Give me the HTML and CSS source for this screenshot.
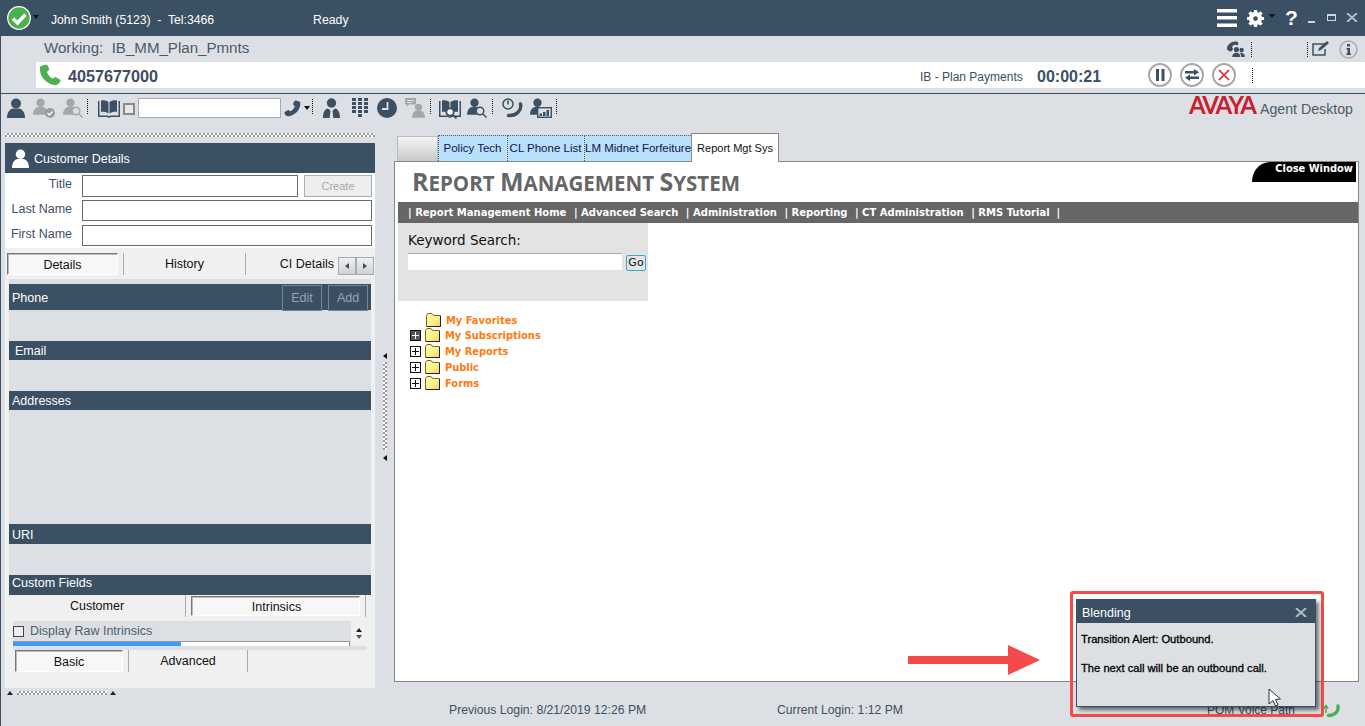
FILE: index.html
```html
<!DOCTYPE html>
<html lang="en">
<head>
    <meta charset="utf-8">
    <title>Avaya Agent Desktop</title>
    <link rel="stylesheet" href="styles.css">
</head>
<body>
    <svg class="defs" width="0" height="0">
        <defs>
            <linearGradient id="folderfill" x1="0" y1="0" x2="1" y2="1">
                <stop offset="0" stop-color="#fffcb0"/>
                <stop offset=".55" stop-color="#fdf08c"/>
                <stop offset="1" stop-color="#f8c878"/>
            </linearGradient>
        </defs>
        <symbol id="person" viewBox="0 0 18 20"><circle cx="9" cy="5.500" r="5"/><path d="M0 20c0-6 3-9 6-9.500h6c3 .5 6 3.500 6 9.500z"/></symbol>
        <symbol id="phone" viewBox="0 0 22 22"><path d="M1 3c-1 7 4 16 14 18 2 .5 5-.5 6-3l.5-1.500c0-.8-4.500-3.500-5.500-3.500l-2 1.500c-2.500-.5-5.500-4-6-6.500l2-2c.5-1-1.500-5.500-2.500-5.500l-2 .5c-2 .5-4 1-4.500 2z"/></symbol>
        <symbol id="book" viewBox="0 0 22 20"><path d="M3 2.500c2.500-.5 5.500 0 7.500 1.500v11.500c-2-1.500-5-2-7.500-1.500zM19 2.500c-2.500-.5-5.500 0-7.500 1.500v11.500c2-1.500 5-2 7.500-1.500z"/><path d="M0 3h1.500v14.500h8.500l1 1 1-1h8.500V3H22v16h-9l-2 1-2-1H0z"/></symbol>
        <symbol id="folder" viewBox="0 0 15 14"><path d="M.5 13.500v-11l1.500-2h4l1.500 2h7v11z" fill="url(#folderfill)" stroke="#6e6e00"/><path d="M1 13.500h13.500V3" fill="none" stroke="#222"/></symbol>
    </svg>

    <div class="page">
        <!-- top title bar -->
        <div class="topbar">
            <svg class="status-icon" viewBox="0 0 24 24"><circle cx="12" cy="12" r="11.300" fill="#4caf50" stroke="#fff" stroke-width="1.200"/><path d="M6 12.500l4.500 4.500 8-8.500" fill="none" stroke="#fff" stroke-width="3.400"/></svg>
            <span class="caret caret-status"></span>
            <span class="agent">John Smith (5123)&nbsp; -&nbsp; Tel:3466</span>
            <span class="ready">Ready</span>
            <span class="top-right">
                <svg class="ic-menu" viewBox="0 0 20 18"><path d="M0 0h20v3.500H0zM0 7h20v3.500H0zM0 14.500h20V18H0z" fill="#fff"/></svg>
                <svg class="ic-gear" viewBox="0 0 20 20"><circle cx="10" cy="10" r="5" fill="none" stroke="#fff" stroke-width="4"/><path d="M10 10L10 1M10 10L10 19M10 10L1 10M10 10L19 10M10 10L3.600 3.600M10 10L16.400 16.400M10 10L16.400 3.600M10 10L3.600 16.400" stroke="#fff" stroke-width="3.400"/><circle cx="10" cy="10" r="2.500" fill="#3c5064"/></svg>
                <span class="caret caret-gear"></span>
                <span class="help">?</span>
                <span class="win-min"></span>
                <span class="win-max"></span>
                <svg class="win-close" viewBox="0 0 12 9"><path d="M1 0l10 9M11 0L1 9" stroke="#fff" stroke-width="2" opacity=".6"/></svg>
            </span>
        </div>

        <!-- work item row -->
        <div class="working">
            <span class="working-text">Working:&nbsp; IB_MM_Plan_Pmnts</span>
            <svg class="ic-conf" viewBox="0 0 20 18"><path d="M1 8c0-4 4-7.500 9-7.500 2 0 3 .5 3 2l-.5 2-3-.5c-2 0-3 1.500-3 3l1 1.500-2 2.500C3 11 1 10 1 8z" fill="#3c5064"/><circle cx="11" cy="9" r="2.700" fill="#3c5064"/><circle cx="16.500" cy="9.500" r="2.300" fill="#3c5064"/><path d="M6.500 17c0-3 2-4.500 4.500-4.500s4 1.500 4 4.500zM15.500 12.500c2.500 0 4.500 1.500 4.500 4.500h-4c0-2-.5-3.500-1.500-4z" fill="#3c5064"/></svg>
            <span class="dots dots-conf"></span>
            <span class="dots dots-note"></span>
            <svg class="ic-note" viewBox="0 0 18 16"><path d="M13 4H1v11h12V9" fill="none" stroke="#3c5064" stroke-width="1.500"/><path d="M6 11l1-3 8-7 2 2-8 7z" fill="#3c5064"/></svg>
            <svg class="ic-info" viewBox="0 0 19 19"><circle cx="9.500" cy="9.500" r="8.500" fill="none" stroke="#a9a9a9" stroke-width="1.500"/><path d="M8 4h3v2.500H8zM7.500 8h3.500v5.500h1V15H7.500v-1.500h1v-4h-1z" fill="#3c5064"/></svg>
        </div>

        <!-- active call row -->
        <div class="callrow">
            <svg class="ic-call"><use href="#phone"/></svg>
            <span class="number">4057677000</span>
            <span class="queue">IB - Plan Payments</span>
            <span class="timer">00:00:21</span>
            <span class="round-btn"><svg viewBox="0 0 12 12"><path d="M2 0h3v12H2zM7.500 0h3v12h-3z" fill="#3c5064"/></svg></span>
            <span class="round-btn"><svg class="swap" viewBox="0 0 14 12"><path d="M0 2h9V0l5 3.250-5 3.250V4.500H0zM14 7.500H5v-2L0 8.750 5 12v-2h9z" fill="#3c5064"/></svg></span>
            <span class="round-btn"><svg viewBox="0 0 12 12"><path d="M1 1l10 10M11 1L1 11" stroke="#d8262c" stroke-width="1.600"/></svg></span>
            <span class="dots dots-call"></span>
        </div>

        <!-- main toolbar -->
        <div class="toolbar">
            <svg class="t-ic t-person"><use href="#person"/></svg>
            <span class="t-badged t-gray">
                <svg class="t-ic t-small"><use href="#person"/></svg>
                <svg class="badge-check" viewBox="0 0 10 10"><circle cx="5" cy="5" r="5" fill="#9c9c9c"/><path d="M2.500 5l2 2 3-3.500" fill="none" stroke="#fff" stroke-width="1.300"/></svg>
            </span>
            <span class="t-badged t-gray t-search-a">
                <svg class="t-ic t-small"><use href="#person"/></svg>
                <svg class="badge-lens" viewBox="0 0 12 12"><circle cx="5" cy="5" r="3.800" fill="#dce0e4" stroke="#a6a6a6" stroke-width="1.500"/><path d="M8 8l3.500 3.500" stroke="#a6a6a6" stroke-width="1.500"/></svg>
            </span>
            <span class="dots dots-a"></span>
            <svg class="t-ic t-book"><use href="#book"/></svg>
            <span class="t-check"></span>
            <input class="t-input" type="text">
            <svg class="t-ic t-phone"><use href="#phone"/></svg>
            <span class="caret caret-dark"></span>
            <span class="dots dots-b"></span>
            <svg class="t-agent" viewBox="0 0 17 20"><circle cx="8.500" cy="5" r="4.700" fill="#3c5064"/><path d="M0 20c0-6 2-9 5-9.500l3 2.500 1 0 3-2.500c3 .5 5 3.500 5 9.500z" fill="#3c5064"/><path d="M7.500 12h2l.8 8H6.700z" fill="#dce0e4"/></svg>
            <span class="dialpad"><i></i><i></i><i></i><i></i><i></i><i></i><i></i><i></i><i></i><i></i><i></i><i></i><b></b><i></i></span>
            <svg class="t-clock" viewBox="0 0 20 20"><circle cx="10" cy="10" r="10" fill="#3c5064"/><path d="M10.500 4v7H5" fill="none" stroke="#dce0e4" stroke-width="1.800"/></svg>
            <span class="t-msg">
                <svg class="t-ic msg-person"><use href="#person"/></svg>
                <svg class="msg-bubble" viewBox="0 0 11 9"><path d="M0 0h11v6.500H4L2 9V6.500H0z" fill="#a6a6a6"/><path d="M2 2h7v1H2zM2 4h5v1H2z" fill="#dce0e4"/></svg>
            </span>
            <span class="dots dots-c"></span>
            <span class="t-badged t-booksearch">
                <svg class="t-ic t-book"><use href="#book"/></svg>
                <svg class="badge-booklens" viewBox="0 0 12 12"><circle cx="5" cy="5" r="3.700" fill="#fff" stroke="#3c5064" stroke-width="1.800"/><path d="M8 8l3.500 3.500" stroke="#3c5064" stroke-width="1.800"/></svg>
            </span>
            <span class="t-badged t-psearch">
                <svg class="t-ic t-small"><use href="#person"/></svg>
                <svg class="badge-lens" viewBox="0 0 12 12"><circle cx="5" cy="5" r="3.800" fill="#dce0e4" stroke="#3c5064" stroke-width="1.500"/><path d="M8 8l3.500 3.500" stroke="#3c5064" stroke-width="1.500"/></svg>
            </span>
            <span class="dots dots-d"></span>
            <svg class="t-timer" viewBox="0 0 21 20"><circle cx="6" cy="6" r="5" fill="none" stroke="#3c5064" stroke-width="1.500"/><path d="M6 2.500v4" stroke="#3c5064" stroke-width="1.600"/><path d="M18.500 6c1.500 6-4 12-12 11.500" fill="none" stroke="#3c5064" stroke-width="3.400" stroke-linecap="round"/></svg>
            <span class="t-badged t-chart">
                <svg class="t-ic t-small"><use href="#person"/></svg>
                <svg class="badge-chart" viewBox="0 0 15 11"><rect x=".7" y=".7" width="13.600" height="9.600" fill="#dce0e4" stroke="#3c5064" stroke-width="1.400"/><path d="M2.500 6.500h2.500v2.500H2.500zM6 5h2.500v4H6zM9.500 3h2.500v6H9.500z" fill="#3c5064"/></svg>
            </span>
            <span class="dots dots-e"></span>
            <span class="brand"><span class="avaya">AVAYA</span><span class="brand-name">Agent Desktop</span></span>
        </div>

        <div class="main">
            <!-- left customer column -->
            <div class="leftcol">
                <div class="grip"></div>
                <div class="cust">
                    <div class="cust-head">
                        <svg class="cust-icon"><use href="#person"/></svg>
                        Customer Details
                    </div>
                    <div class="cust-form">
                        <div class="form-row">
                            <label>Title</label>
                            <span class="field field-short"></span>
                            <span class="create">Create</span>
                        </div>
                        <div class="form-row">
                            <label>Last Name</label>
                            <span class="field"></span>
                        </div>
                        <div class="form-row">
                            <label>First Name</label>
                            <span class="field"></span>
                        </div>
                    </div>
                    <div class="tabs tabs-details">
                        <span class="tab-on tab-details">Details</span>
                        <span class="tab tab-history">History</span>
                        <span class="tab-ci">CI Details</span>
                        <span class="arrows"><i class="arrow-l"></i><i class="arrow-r"></i></span>
                    </div>
                    <div class="sections">
                        <div class="sec-head sec-phone">
                            <span>Phone</span>
                            <span class="sec-btn sec-edit">Edit</span>
                            <span class="sec-btn">Add</span>
                        </div>
                        <div class="sec-body body-phone"></div>
                        <div class="sec-head sec-email">Email</div>
                        <div class="sec-body body-email"></div>
                        <div class="sec-head sec-addr">Addresses</div>
                        <div class="sec-body body-addr"></div>
                        <div class="sec-head sec-uri">URI</div>
                        <div class="sec-body body-uri"></div>
                        <div class="sec-head sec-custom">Custom Fields</div>
                    </div>
                    <div class="tabs tabs-custom">
                        <span class="tab tab-customer">Customer</span>
                        <span class="tab-on tab-intrinsics">Intrinsics</span>
                    </div>
                    <div class="raw">
                        <div class="raw-left">
                            <div class="raw-line"><span class="raw-check"></span>Display Raw Intrinsics</div>
                            <div class="raw-bar"><div class="raw-fill"></div></div>
                        </div>
                        <div class="raw-scroll"><i class="up"></i><i class="down"></i></div>
                    </div>
                    <div class="tabs tabs-basic">
                        <span class="tab-on tab-basic">Basic</span>
                        <span class="tab tab-adv">Advanced</span>
                    </div>
                </div>
                <div class="grip-small"><i class="up"></i><span></span><i class="up"></i></div>
            </div>

            <!-- vertical splitter -->
            <div class="splitter"><i class="tri-l"></i><span></span><i class="tri-l"></i></div>

            <!-- right browser area -->
            <div class="browser">
                <div class="b-tabs">
                    <span class="b-tab-blank"></span>
                    <span class="b-tab b-w1">Policy Tech</span>
                    <span class="b-tab b-w2">CL Phone List</span>
                    <span class="b-tab b-w3">LM Midnet Forfeiture</span>
                    <span class="b-tab-on">Report Mgt Sys</span>
                </div>
                <div class="b-content">
                    <a class="close-win">Close Window</a>
                    <div class="rms-title"><span>R</span>eport <span>M</span>anagement <span>S</span>ystem</div>
                    <div class="rms-nav">
                        <span>| Report Management Home</span>
                        <span>| Advanced Search</span>
                        <span>| Administration</span>
                        <span>| Reporting</span>
                        <span>| CT Administration</span>
                        <span>| RMS Tutorial&nbsp; |</span>
                    </div>
                    <div class="search">
                        <div class="search-label">Keyword Search:</div>
                        <div class="search-row">
                            <span class="search-input"></span>
                            <span class="go">Go</span>
                        </div>
                    </div>
                    <ul class="tree">
                        <li class="tree-first"><svg class="folder"><use href="#folder"/></svg>My Favorites</li>
                        <li><span class="plus plus-on"></span><svg class="folder"><use href="#folder"/></svg>My Subscriptions</li>
                        <li><span class="plus"></span><svg class="folder"><use href="#folder"/></svg>My Reports</li>
                        <li><span class="plus"></span><svg class="folder"><use href="#folder"/></svg>Public</li>
                        <li><span class="plus"></span><svg class="folder"><use href="#folder"/></svg>Forms</li>
                    </ul>
                </div>
            </div>
        </div>

        <!-- bottom status -->
        <div class="status">
            <span class="st-prev">Previous Login: 8/21/2019 12:26 PM</span>
            <span class="st-cur">Current Login: 1:12 PM</span>
            <span class="st-pom">POM Voice Path</span>
            <svg class="st-phone" viewBox="0 0 18 14"><path d="M15 2c1 5-3 9.500-9.500 9.500" fill="none" stroke="#4caf50" stroke-width="3.400" stroke-linecap="round"/><path d="M3 9V3M.8 4.500L3 1.500l2.200 3" fill="none" stroke="#4caf50" stroke-width="1.500"/></svg>
        </div>
    </div>

    <!-- annotation and popup lie over the page -->
    <svg class="red-arrow" viewBox="0 0 132 30"><path d="M0 11h100V0l32 15-32 15V19H0z" fill="#f44a4a"/></svg>
    <div class="red-box"></div>
    <div class="popup">
        <div class="popup-head">
            <span>Blending</span>
            <svg class="popup-x" viewBox="0 0 12 9"><path d="M1 0l10 9M11 0L1 9" stroke="#fff" stroke-width="2" opacity=".6"/></svg>
        </div>
        <div class="popup-body">
            <p>Transition Alert: Outbound.</p>
            <p>The next call will be an outbound call.</p>
        </div>
    </div>
    <svg class="cursor" viewBox="0 0 13 19"><path d="M1 1v15l4-3.500 2.500 5.500 2.500-1-2.500-5.500 5-.5z" fill="#fff" stroke="#333"/></svg>
</body>
</html>
```

FILE: styles.css
```css
* {
    box-sizing: border-box;
}

html, body {
    margin: 0;
    height: 726px;
    overflow: hidden;
}

body {
    font-family: "Liberation Sans", Arial, sans-serif;
    font-size: 12px;
    color: #3c5064;
    background-color: #dce0e4;
    position: relative;
}

.defs {
    position: absolute;
}

.page {
    height: 726px;
    background-color: #dce0e4;
    box-shadow: inset 1px 0 0 #3c5064;
}

.caret {
    width: 0;
    height: 0;
    border-left: 3.500px solid transparent;
    border-right: 3.500px solid transparent;
    border-top: 4px solid #111;
}

.dots {
    width: 0;
    height: 15px;
    border-left: 1px dotted #111;
    flex: none;
}

/* top title bar */
.topbar {
    height: 36px;
    background-color: #3c5064;
    color: #fff;
    display: flex;
    align-items: center;
    padding-left: 7px;
}

.status-icon {
    width: 24px;
    height: 24px;
}

.caret-status {
    margin-left: 2px;
    margin-top: -2px;
}

.agent {
    margin-left: 12px;
    width: 262px;
    white-space: nowrap;
    font-size: 12.200px;
    margin-top: 3px;
}

.ready {
    font-size: 12.300px;
    margin-top: 4px;
}

.top-right {
    margin-left: auto;
    display: flex;
    align-items: center;
    padding-right: 7px;
}

.ic-menu {
    width: 20px;
    height: 18px;
}

.ic-gear {
    width: 19px;
    height: 19px;
    margin-left: 9px;
}

.caret-gear {
    border-top-color: #111;
    margin-left: 4px;
    margin-top: -4px;
}

.help {
    font-size: 21px;
    font-weight: bold;
    margin-left: 10px;
    width: 14px;
    line-height: 22px;
}

.win-min {
    width: 7px;
    height: 2px;
    background-color: #cfd6dc;
    margin-left: 9px;
    margin-top: 7px;
}

.win-max {
    width: 9px;
    height: 7px;
    border: 1px solid #cfd6dc;
    border-top-width: 2px;
    margin-left: 12px;
    margin-top: -1px;
}

.win-close {
    width: 12px;
    height: 9px;
    margin-left: 10px;
    margin-top: -1px;
}

/* working row */
.working {
    height: 26px;
    display: flex;
    align-items: center;
    padding-left: 44px;
    padding-right: 7px;
}

.working-text {
    font-size: 15.100px;
    color: #4c5a68;
    margin-top: -4px;
}

.ic-conf {
    width: 19px;
    height: 17px;
    margin-left: auto;
}

.dots-conf {
    margin-left: 6px;
}

.dots-note {
    margin-left: 55px;
}

.ic-note {
    width: 18px;
    height: 16px;
    margin-left: 4px;
    margin-top: -2px;
}

.ic-info {
    width: 19px;
    height: 19px;
    margin-left: 9px;
}

/* active call row */
.callrow {
    height: 26px;
    margin-left: 36px;
    background-color: #fff;
    display: flex;
    align-items: center;
    padding-left: 3px;
}

.ic-call {
    width: 22px;
    height: 22px;
    fill: #4caf50;
}

.number {
    font-size: 16.200px;
    font-weight: bold;
    color: #3f4d5c;
    margin-left: 7px;
    width: 852px;
    padding-top: 3px;
}

.queue {
    width: 117px;
    color: #3c5064;
    padding-top: 3px;
}

.timer {
    font-size: 16px;
    font-weight: bold;
    width: 111px;
    padding-top: 3px;
}

.round-btn {
    width: 24px;
    height: 24px;
    border: 2px solid #a9a9a9;
    border-radius: 50%;
    display: flex;
    align-items: center;
    justify-content: center;
    margin-right: 8px;
    background-color: #fff;
}

.round-btn svg {
    width: 12px;
    height: 12px;
}

.round-btn .swap {
    width: 14px;
}

.dots-call {
    margin-left: 8px;
}

/* toolbar */
.toolbar {
    height: 40px;
    margin-top: 5px;
    margin-left: 1px;
    border-top: 1px solid #3c5064;
    display: flex;
    align-items: flex-start;
    padding: 4px 12px 0 6px;
    fill: #3c5064;
}

.t-ic {
    flex: none;
}

.t-person {
    width: 18px;
    height: 20px;
}

.t-small {
    width: 15px;
    height: 17px;
}

.t-badged {
    position: relative;
    display: block;
    height: 21px;
    flex: none;
}

.t-gray {
    fill: #a6a6a6;
    width: 22px;
    margin-left: 8px;
}

.t-search-a {
    width: 19px;
}

.badge-check {
    position: absolute;
    left: 12px;
    top: 10px;
    width: 10px;
    height: 10px;
}

.badge-lens {
    position: absolute;
    left: 8px;
    top: 8px;
    width: 12px;
    height: 12px;
}

.dots-a {
    margin-left: 5px;
    margin-top: 1px;
}

.t-book {
    width: 22px;
    height: 20px;
}

.toolbar > .t-book {
    margin-left: 10px;
}

.t-check {
    width: 12px;
    height: 12px;
    border: 2px solid #8a8a8a;
    background-color: #e8e8e8;
    margin-left: 3px;
    margin-top: 5px;
    flex: none;
}

.t-input {
    width: 143px;
    height: 20px;
    border: 1px solid #a9a9c0;
    background-color: #fff;
    margin-left: 3px;
    padding: 0;
    flex: none;
}

.t-phone {
    width: 19px;
    height: 17px;
    margin-left: 2px;
    margin-top: 2px;
    transform: scaleX(-1);
}

.caret-dark {
    margin-left: 2px;
    margin-top: 8px;
    flex: none;
}

.dots-b {
    margin-left: 2px;
    margin-top: 1px;
}

.t-agent {
    width: 17px;
    height: 20px;
    margin-left: 10px;
    flex: none;
}

.dialpad {
    width: 16px;
    display: grid;
    grid-template-columns: repeat(3, 4px);
    column-gap: 2px;
    row-gap: 1px;
    margin-left: 12px;
    flex: none;
}

.dialpad i {
    height: 3px;
    background-color: #3c5064;
}

.dialpad b {
    height: 3px;
}

.t-clock {
    width: 20px;
    height: 20px;
    margin-left: 9px;
    flex: none;
}

.t-msg {
    position: relative;
    width: 20px;
    height: 21px;
    margin-left: 8px;
    flex: none;
    fill: #a6a6a6;
}

.msg-person {
    position: absolute;
    right: 0;
    top: 5px;
    width: 13px;
    height: 15px;
}

.msg-bubble {
    position: absolute;
    left: 0;
    top: 0;
    width: 11px;
    height: 9px;
}

.dots-c {
    margin-left: 5px;
    margin-top: 1px;
}

.t-booksearch {
    width: 22px;
    margin-left: 8px;
}

.badge-booklens {
    position: absolute;
    left: 6px;
    top: 9px;
    width: 12px;
    height: 12px;
}

.t-psearch {
    width: 20px;
    margin-left: 6px;
}

.dots-d {
    margin-left: 5px;
    margin-top: 1px;
}

.t-timer {
    width: 21px;
    height: 20px;
    margin-left: 9px;
    flex: none;
}

.t-chart {
    width: 22px;
    margin-left: 7px;
}

.badge-chart {
    position: absolute;
    left: 7px;
    top: 9px;
    width: 15px;
    height: 11px;
}

.dots-e {
    margin-left: 4px;
    margin-top: 1px;
}

.brand {
    margin-left: auto;
    display: flex;
    align-items: baseline;
    margin-top: -6px;
}

.avaya {
    font-family: Lato, sans-serif;
    font-weight: 700;
    font-size: 24px;
    color: #c8202f;
    letter-spacing: -2px;
    line-height: 26px;
}

.brand-name {
    font-size: 14.200px;
    color: #4c5a68;
    margin-left: 5px;
}

/* main area */
.main {
    display: flex;
    align-items: flex-start;
    height: 560px;
    padding-left: 5px;
}

.leftcol {
    width: 370px;
    flex: none;
}

.grip {
    height: 4px;
    margin-bottom: 6px;
    background: conic-gradient(#999 25%, #fff 0 50%, #999 0 75%, #fff 0) 0 0 / 4px 4px;
}

.cust {
    height: 545px;
    background-color: #f0f0f0;
    font-size: 12.500px;
}

.cust-head {
    height: 30px;
    background-color: #3c5064;
    color: #fff;
    display: flex;
    align-items: center;
    padding: 1px 0 0 7px;
    fill: #fff;
}

.cust-icon {
    width: 17px;
    height: 19px;
    margin-right: 5px;
}

.cust-form {
    height: 75px;
    background-color: #fff;
    padding-top: 2px;
}

.form-row {
    display: flex;
    align-items: flex-start;
    height: 25px;
    padding-right: 3px;
}

.form-row label {
    width: 67px;
    text-align: right;
    margin-right: 10px;
    margin-top: 2px;
}

.field {
    flex: 1;
    height: 21px;
    border: 1px solid #6a6a6a;
    background-color: #fff;
}

.field-short {
    flex: none;
    width: 216px;
    height: 22px;
}

.create {
    width: 68px;
    height: 22px;
    margin-left: 6px;
    background-color: #eee;
    border: 1px solid #a5b0bc;
    color: #a8a8a8;
    font-size: 11px;
    display: flex;
    align-items: center;
    justify-content: center;
}

.tabs {
    display: flex;
    color: #111;
}

.tab {
    display: flex;
    align-items: center;
    justify-content: center;
    height: 22px;
    border-right: 1px solid #aaa;
}

.tab-on {
    display: flex;
    align-items: center;
    justify-content: center;
    height: 22px;
    padding-top: 2px;
    background-color: #f7f7f7;
    border: 1px solid #fff;
    border-top: 1px solid #777;
    border-left: 1px solid #777;
    box-shadow: inset 1px 1px 0 #bbb;
    flex: none;
}

.tabs-details {
    height: 26px;
    margin-top: 5px;
    padding-left: 2px;
}

.tab-details {
    width: 111px;
    margin-right: 5px;
}

.tabs-details .tab {
    border-left: 1px solid #aaa;
}

.tab-history {
    width: 123px;
}

.tab-ci {
    width: 88px;
    height: 22px;
    display: flex;
    align-items: center;
    justify-content: flex-end;
    flex: none;
}

.arrows {
    display: flex;
    margin-left: 4px;
    margin-top: 4px;
}

.arrows i {
    width: 18px;
    height: 18px;
    border: 1px solid #aaa;
    background: linear-gradient(#eef0f3, #cfd2d8);
    display: block;
    position: relative;
}

.arrow-l::after, .arrow-r::after {
    content: "";
    position: absolute;
    left: 6px;
    top: 5px;
    border-top: 3px solid transparent;
    border-bottom: 3px solid transparent;
}

.arrow-l::after {
    border-right: 4px solid #3c5064;
}

.arrow-r::after {
    border-left: 4px solid #3c5064;
}

.sections {
    margin: 0 4px;
    padding-top: 5px;
    background-color: #dce0e4;
}

.sec-head {
    height: 20px;
    background-color: #3c5064;
    color: #fff;
    display: flex;
    align-items: center;
    padding-left: 3px;
}

.sec-phone {
    height: 26px;
    padding-top: 1px;
}

.sec-email {
    height: 19px;
    padding-left: 6px;
}

.sec-addr {
    height: 19px;
    padding-top: 1px;
}

.sec-uri {
    padding-top: 1px;
}

.sec-custom {
    padding-bottom: 4px;
}

.sec-btn {
    width: 40px;
    height: 26px;
    border: 1px solid #75838f;
    color: #9aa4ae;
    display: flex;
    align-items: center;
    justify-content: center;
    margin-right: 3px;
}

.sec-edit {
    margin-left: auto;
    margin-right: 6px;
}

.body-phone {
    height: 31px;
}

.body-email {
    height: 31px;
}

.body-addr {
    height: 114px;
}

.body-uri {
    height: 31px;
}

.tabs-custom {
    height: 22px;
    margin: 0 4px;
    align-items: center;
}

.tab-customer {
    width: 177px;
}

.tab-intrinsics {
    width: 169px;
    height: 20px;
    margin-left: 5px;
    padding-left: 2px;
    padding-top: 2px;
}

.tabs-custom::after {
    content: "";
    width: 1px;
    height: 22px;
    background-color: #aaa;
    margin-left: 5px;
}

.raw {
    display: flex;
    margin: 4px 8px 0;
    height: 29px;
    background-color: #dce0e4;
}

.raw-left {
    width: 337px;
}

.raw-line {
    height: 20px;
    display: flex;
    align-items: center;
    color: #4c5e70;
}

.raw-check {
    width: 11px;
    height: 11px;
    border: 1px solid #444;
    background-color: #eee;
    margin-right: 6px;
}

.raw-bar {
    height: 5px;
    background-color: #fff;
    border-top: 1px solid #999;
    border-right: 1px solid #999;
}

.raw-fill {
    width: 168px;
    height: 4px;
    background-color: #3d9bf5;
}

.raw-scroll {
    width: 16px;
    margin-left: 1px;
    height: 25px;
    background-color: #f0f0f0;
    display: flex;
    flex-direction: column;
    align-items: center;
    justify-content: space-around;
    padding: 5px 0;
}

.up {
    display: block;
    width: 0;
    height: 0;
    border-left: 3.500px solid transparent;
    border-right: 3.500px solid transparent;
    border-bottom: 4px solid #222;
}

.down {
    display: block;
    width: 0;
    height: 0;
    border-left: 3.500px solid transparent;
    border-right: 3.500px solid transparent;
    border-top: 4px solid #555;
}

.tabs-basic {
    height: 22px;
    padding-left: 10px;
}

.tab-basic {
    width: 108px;
    margin-right: 5px;
}

.tabs-basic .tab {
    border-left: 1px solid #aaa;
}

.tab-adv {
    width: 120px;
}

.grip-small {
    display: flex;
    align-items: center;
    height: 8px;
    margin-top: 1px;
    padding-left: 2px;
}

.grip-small span {
    width: 90px;
    height: 4px;
    margin: 0 3px 0 4px;
    background: conic-gradient(#999 25%, #fff 0 50%, #999 0 75%, #fff 0) 0 0 / 4px 4px;
}

/* splitter */
.splitter {
    width: 19px;
    flex: none;
    margin-top: 220px;
    display: flex;
    flex-direction: column;
    align-items: center;
}

.splitter span {
    height: 88px;
    width: 4px;
    margin: 3px 0 5px;
    background: conic-gradient(#999 25%, #fff 0 50%, #999 0 75%, #fff 0) 0 0 / 4px 4px;
}

.tri-l {
    width: 0;
    height: 0;
    border-top: 3.500px solid transparent;
    border-bottom: 3.500px solid transparent;
    border-right: 4px solid #111;
}

/* right browser area */
.browser {
    width: 965px;
    flex: none;
}

.b-tabs {
    display: flex;
    align-items: flex-end;
    height: 29px;
    font-size: 11.500px;
    position: relative;
    z-index: 1;
    margin-bottom: -1px;
    padding-left: 3px;
}

.b-tab-blank {
    width: 41px;
    height: 25px;
    margin-bottom: 1px;
    border: 1px solid #bbb;
    border-bottom: 0;
    background: linear-gradient(#f4f4f4, #c9c9c9);
}

.b-tab {
    height: 26px;
    margin-bottom: 1px;
    margin-right: 1px;
    padding-top: 6px;
    background-color: #b7e1fb;
    border-top: 1px dotted #557;
    border-left: 1px dotted #557;
    color: #1c1050;
    text-align: center;
    white-space: nowrap;
}

.b-w1 {
    width: 68px;
}

.b-w2 {
    width: 76px;
}

.b-w3 {
    width: 107px;
    margin-right: 0;
}

.b-tab-on {
    width: 88px;
    height: 29px;
    padding-top: 8px;
    background-color: #fff;
    border: 1px solid #888;
    border-bottom: 0;
    color: #111;
    font-size: 11px;
    text-align: center;
    white-space: nowrap;
}

.b-content {
    height: 521px;
    background-color: #fff;
    border: 1px solid #888;
    position: relative;
    font-family: "DejaVu Sans", Verdana, sans-serif;
    padding-left: 3px;
}

.close-win {
    position: absolute;
    right: 2px;
    top: 0;
    width: 104px;
    height: 20px;
    background-color: #000;
    border-top-left-radius: 18px 20px;
    color: #fff;
    font-size: 9.900px;
    font-weight: bold;
    text-align: right;
    padding: 1px 3px 0 0;
    line-height: 12px;
}

.rms-title {
    font-family: "Open Sans", sans-serif;
    font-weight: 700;
    font-size: 20.500px;
    text-transform: uppercase;
    line-height: 38px;
    height: 40px;
    color: #666;
    padding-left: 14px;
    white-space: nowrap;
}

.rms-title span {
    font-size: 25px;
}

.rms-nav {
    height: 21px;
    background-color: #666;
    color: #fff;
    font-size: 10px;
    font-weight: bold;
    display: flex;
    align-items: center;
    padding-left: 10px;
    gap: 7.500px;
    white-space: nowrap;
}

.search {
    width: 250px;
    height: 78px;
    background-color: #e3e3e3;
    padding: 10px 0 0 10px;
}

.search-label {
    font-size: 13.500px;
    color: #111;
    line-height: 15px;
}

.search-row {
    display: flex;
    align-items: flex-end;
    margin-top: 5px;
}

.search-input {
    width: 214px;
    height: 17px;
    background-color: #fff;
    border-top: 1px solid #aaa;
}

.go {
    width: 20px;
    height: 16px;
    margin-left: 4px;
    margin-bottom: -1px;
    border: 1px solid #33a8d8;
    border-radius: 2px;
    background-color: #e6e6e6;
    color: #111;
    font-size: 11px;
    text-align: center;
    line-height: 14px;
}

.tree {
    list-style: none;
    margin: 12px 0 0;
    padding: 0 0 0 12px;
    color: #ff7a10;
    font-size: 9.900px;
    font-weight: bold;
}

.tree li {
    display: flex;
    align-items: center;
    height: 16px;
}

.tree .tree-first {
    height: 14px;
    padding-left: 16px;
}

.folder {
    width: 15px;
    height: 14px;
    margin-right: 5px;
}

.plus {
    width: 11px;
    height: 11px;
    border: 1px solid #111;
    margin-right: 4px;
    background:
        linear-gradient(#111, #111) center / 7px 1px no-repeat,
        linear-gradient(#111, #111) center / 1px 7px no-repeat,
        #fff;
}

.plus-on {
    background:
        linear-gradient(#fff, #fff) center / 7px 1px no-repeat,
        linear-gradient(#fff, #fff) center / 1px 7px no-repeat,
        #555;
}

/* bottom status */
.status {
    display: flex;
    align-items: center;
    height: 20px;
    margin-top: 7px;
    color: #3c5064;
    padding-left: 449px;
    font-size: 12.200px;
}

.st-prev {
    width: 328px;
}

.st-cur {
    width: 430px;
}

.st-pom {
    width: 116px;
    font-size: 12px;
}

.st-phone {
    width: 18px;
    height: 14px;
    margin-top: 2px;
}

/* overlay: annotation and popup */
.red-arrow {
    position: absolute;
    left: 908px;
    top: 645px;
    width: 132px;
    height: 30px;
}

.red-box {
    position: absolute;
    left: 1070px;
    top: 591px;
    width: 254px;
    height: 126px;
    border: 3px solid #f44a4a;
    border-radius: 3px;
}

.popup {
    position: absolute;
    left: 1076px;
    top: 599px;
    width: 240px;
    height: 108px;
    background-color: #dce0e4;
    border: 1px solid #3c5064;
    box-shadow: 3px 3px 4px rgba(0, 0, 0, .55);
}

.popup-head {
    height: 23px;
    background-color: #3c5064;
    color: #fff;
    font-size: 12.500px;
    display: flex;
    align-items: center;
    justify-content: space-between;
    padding: 2px 8px 0 5px;
}

.popup-x {
    width: 12px;
    height: 9px;
}

.popup-body {
    color: #000;
    font-size: 11.200px;
    padding: 10px 4px;
    -webkit-text-stroke: .3px #000;
}

.popup-body p {
    margin: 0 0 16px;
    line-height: 13px;
}

.cursor {
    position: absolute;
    left: 1268px;
    top: 688px;
    width: 13px;
    height: 19px;
}
```
